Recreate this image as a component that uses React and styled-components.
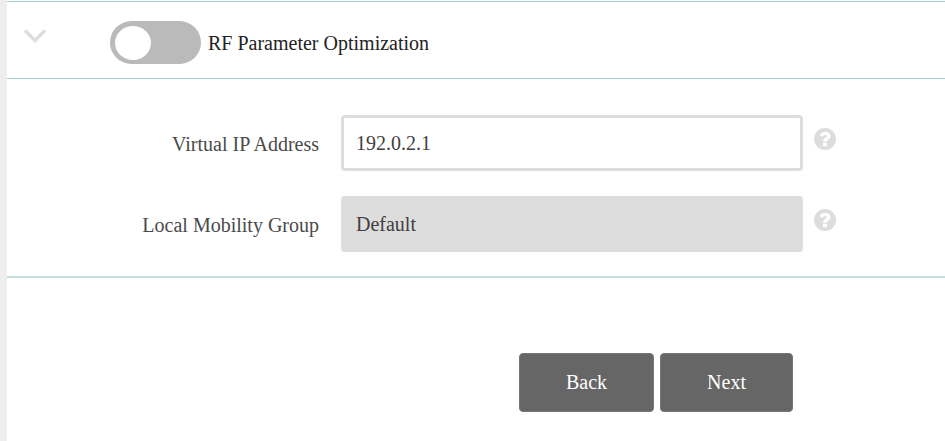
import React, { useState } from "react";
import styled, { createGlobalStyle } from "styled-components";

const GlobalStyle = createGlobalStyle`
  * {
    box-sizing: border-box;
  }
  body {
    margin: 0;
    background: #fff;
    color: #4a4a4a;
    font-family: "Liberation Serif", "Times New Roman", serif;
    font-size: 20px;
    line-height: 24px;
  }
  button,
  input {
    font: inherit;
  }
`;

const Page = styled.main`
  min-height: 100vh;
  padding-top: 1px;
  border-left: 7px solid #eee;
`;

const Header = styled.header`
  display: flex;
  align-items: flex-start;
  height: 78px;
  padding: 19px 16px;
  border-top: 1px solid #a5cfce;
  border-bottom: 1px solid #a5cfce;
`;

const Collapse = styled.button`
  display: flex;
  margin: 6px 63px 0 0;
  padding: 0;
  border: none;
  background: none;
  cursor: pointer;
`;

const SwitchLabel = styled.label`
  display: flex;
  align-items: center;
  gap: 7px;
  color: #222;
  cursor: pointer;
`;

const Switch = styled.input`
  appearance: none;
  display: flex;
  align-items: center;
  width: 91px;
  height: 43px;
  margin: 0;
  padding: 0 5px;
  border-radius: 22px;
  background: #bababa;
  cursor: pointer;

  &::before {
    content: "";
    width: 36px;
    height: 34px;
    border-radius: 50%;
    background: #fff;
  }

  &:checked {
    justify-content: flex-end;
    background: #6cb9b6;
  }
`;

const Fields = styled.section`
  display: flex;
  flex-direction: column;
  gap: 25px;
  padding: 36px 109px 24px 0;
  border-bottom: 2px solid #c3dfde;
`;

const Field = styled.div`
  display: grid;
  grid-template-columns: 312px 1fr 22px;
  align-items: center;
`;

const Label = styled.label`
  padding-top: 2px;
  text-align: right;
`;

const TextInput = styled.input`
  min-width: 0;
  height: 56px;
  margin: 0 11px 0 22px;
  padding: 0 12px;
  border: 3px solid #ddd;
  border-radius: 4px;
  background: #fff;
  color: #404040;

  &:disabled {
    background: #ddd;
  }
`;

const Help = styled.button`
  display: flex;
  padding: 0 0 8px;
  border: none;
  background: none;
  color: #ddd;
  cursor: help;
`;

const Actions = styled.footer`
  display: flex;
  justify-content: flex-end;
  gap: 6px;
  padding: 75px 152px 28px 0;
`;

const Button = styled.button`
  height: 59px;
  padding: 0 46px 2px;
  border: 1px solid #777;
  border-radius: 4px;
  background: #666;
  color: #fff;
  cursor: pointer;
`;

const HelpIcon = () => (
  <svg width="22" height="22" viewBox="128 128 1536 1536" fill="none">
    <circle cx="896" cy="896" r="768" fill="currentColor" />
    <path
      fill="#fff"
      d="M1024 1376v-192q0-14-9-23t-23-9h-192q-14 0-23 9t-9 23v192q0 14 9 23t23 9h192q14 0 23-9t9-23zM1280 704q0-88-55.5-163t-138.5-116-170-41q-243 0-371 213-15 24 8 42l132 100q7 6 19 6 16 0 25-12 53-68 86-92 34-24 86-24 48 0 85.5 26t37.5 59q0 38-20 61t-68 45q-63 28-115.5 86.5t-52.5 125.5v36q0 14 9 23t23 9h192q14 0 23-9t9-23q0-19 21.5-49.5t54.5-49.5q32-18 49-28.5t46-35 44.5-48 28-60.5 12.5-81z"
    />
  </svg>
);

const FormField = ({ id, label, ...rest }) => (
  <Field>
    <Label htmlFor={id}>{label}</Label>
    <TextInput id={id} type="text" {...rest} />
    <Help type="button" aria-label="Help">
      <HelpIcon />
    </Help>
  </Field>
);

const App = () => {
  const [optimize, setOptimize] = useState(false);
  const [address, setAddress] = useState("192.0.2.1");

  return (
    <>
      <GlobalStyle />
      <Page>
        <Header>
          <Collapse type="button" aria-label="Collapse">
            <svg width="24" height="18" viewBox="0 0 24 18" fill="none">
              <path d="M2 3.5L12 13.5L22 3.5" stroke="#ddd" strokeWidth="3.4" />
            </svg>
          </Collapse>
          <SwitchLabel>
            <Switch
              type="checkbox"
              role="switch"
              checked={optimize}
              onChange={(e) => setOptimize(e.target.checked)}
            />
            RF Parameter Optimization
          </SwitchLabel>
        </Header>
        <Fields>
          <FormField
            id="virtual-ip"
            label="Virtual IP Address"
            value={address}
            onChange={(e) => setAddress(e.target.value)}
          />
          <FormField
            id="mobility-group"
            label="Local Mobility Group"
            value="Default"
            disabled
          />
        </Fields>
        <Actions>
          <Button type="button">Back</Button>
          <Button type="button">Next</Button>
        </Actions>
      </Page>
    </>
  );
};

export default App;
